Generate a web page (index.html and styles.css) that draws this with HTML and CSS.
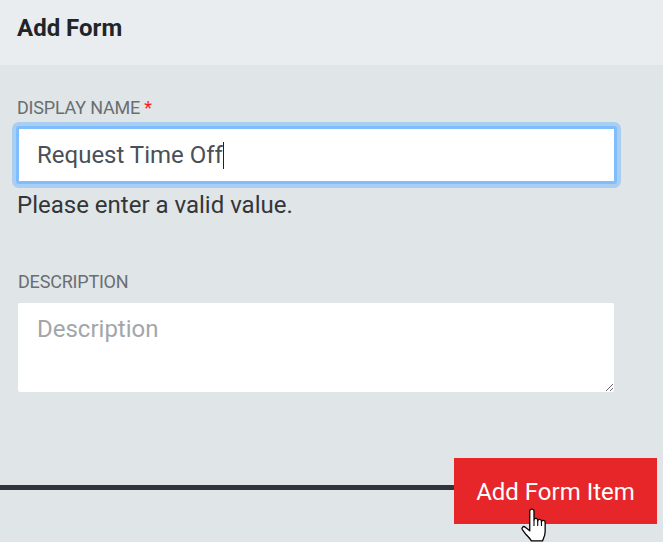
FILE: index.html
```html
<!DOCTYPE html>
<html lang="en">
<head>
<meta charset="utf-8">
<title>Add Form</title>
<link rel="stylesheet" href="styles.css">
</head>
<body>
<div class="page">
  <header class="header">
    <h1 class="title">Add Form</h1>
  </header>
  <main class="body">
    <div class="field">
      <label class="label">DISPLAY NAME <span class="req">*</span></label>
      <div class="input focused"><span class="value">Request Time Off</span><span class="caret"></span></div>
      <div class="error">Please enter a valid value.</div>
    </div>
    <div class="field field-desc">
      <label class="label" for="desc">DESCRIPTION</label>
      <textarea id="desc" class="textarea" placeholder="Description"></textarea>
    </div>
  </main>
  <footer class="footer">
    <div class="rule"></div>
    <button class="btn" type="button">Add Form Item</button>
    <svg class="cursor" viewBox="0 0 26 32" width="28" height="34" aria-hidden="true">
      <path d="M9 3 a2 2 0 0 1 4 0 V11.5 a1.75 1.75 0 0 1 3.5 0 V12.5 a1.75 1.75 0 0 1 3.5 0 V13.5 a1.75 1.75 0 0 1 3.5 0 V22 c0 4 -1.5 6 -2.5 9 H10.5 c-1 -2 -3 -4 -5 -6 L2.2 20.6 a1.8 1.8 0 0 1 2.6 -2.5 L9 21.5 Z" fill="#fff" stroke="#000" stroke-width="1.2" stroke-linejoin="round"/>
      <path d="M13 11.5 V17 M16.5 12.5 V17 M20 13.5 V17" fill="none" stroke="#000" stroke-width="1"/>
    </svg>
  </footer>
</div>
</body>
</html>
```
FILE: styles.css
```css
* { box-sizing: border-box; }
html, body { margin: 0; padding: 0; }
body {
  background: #e0e5e8;
  font-family: Roboto, "Liberation Sans", Arial, sans-serif;
  min-height: 100vh;
}
.page { width: 663px; }
.header {
  height: 65px;
  background: #e9edf0;
  padding: 0 17px;
  display: flex;
  align-items: center;
}
.title {
  margin: 0;
  font-size: 24px;
  font-weight: 700;
  color: #212529;
  line-height: 28px;
  padding-bottom: 10px;
}
.body {
  padding: 32px 46px 0 16px;
}
.label {
  display: block;
  font-size: 18px;
  line-height: 21px;
  color: #6a6e72;
  font-weight: 400;
  padding-left: 1px;
  letter-spacing: -0.2px;
}
.req { color: #ff1a1a; }
.input {
  margin-top: 8px;
  height: 58px;
  width: 601px;
  background: #fff;
  border: 3px solid #80bdff;
  border-radius: 3px;
  box-shadow: 0 0 0 4px #aacdf2;
  display: flex;
  align-items: center;
  padding: 0 18px;
  font-size: 24px;
  color: #495057;
}
.caret {
  display: inline-block;
  width: 1px;
  height: 27px;
  background: #222;
  margin-left: 0;
}
.error {
  margin-top: 8px;
  font-size: 24px;
  line-height: 26px;
  color: #333638;
  padding-left: 1px;
}
.field-desc { margin-top: 53px; padding-left: 2px; }
.field-desc .label { padding-left: 0; }
.textarea {
  display: block;
  margin-top: 11px;
  width: 596px;
  height: 89px;
  border: 0;
  border-radius: 2px;
  background: #fff;
  padding: 10px 19px;
  font-family: Roboto, "Liberation Sans", Arial, sans-serif;
  font-size: 24px;
  line-height: 33px;
  color: #495057;
  outline: none;
  resize: vertical;
}
.textarea::placeholder { color: #a3a6a9; }
.footer {
  margin-top: 66px;
  display: flex;
  align-items: flex-start;
  padding-right: 6px;
  position: relative;
}
.rule {
  flex: 1;
  height: 5px;
  margin-top: 27px;
  background: #2f353b;
}
.btn {
  width: 203px;
  height: 66px;
  border: 0;
  border-radius: 0;
  background: #e62628;
  color: #fff;
  font-family: Roboto, "Liberation Sans", Arial, sans-serif;
  font-size: 24px;
  padding: 2px 0 0 0;
  cursor: pointer;
}
.cursor {
  position: absolute;
  left: 520px;
  top: 50px;
}
```
